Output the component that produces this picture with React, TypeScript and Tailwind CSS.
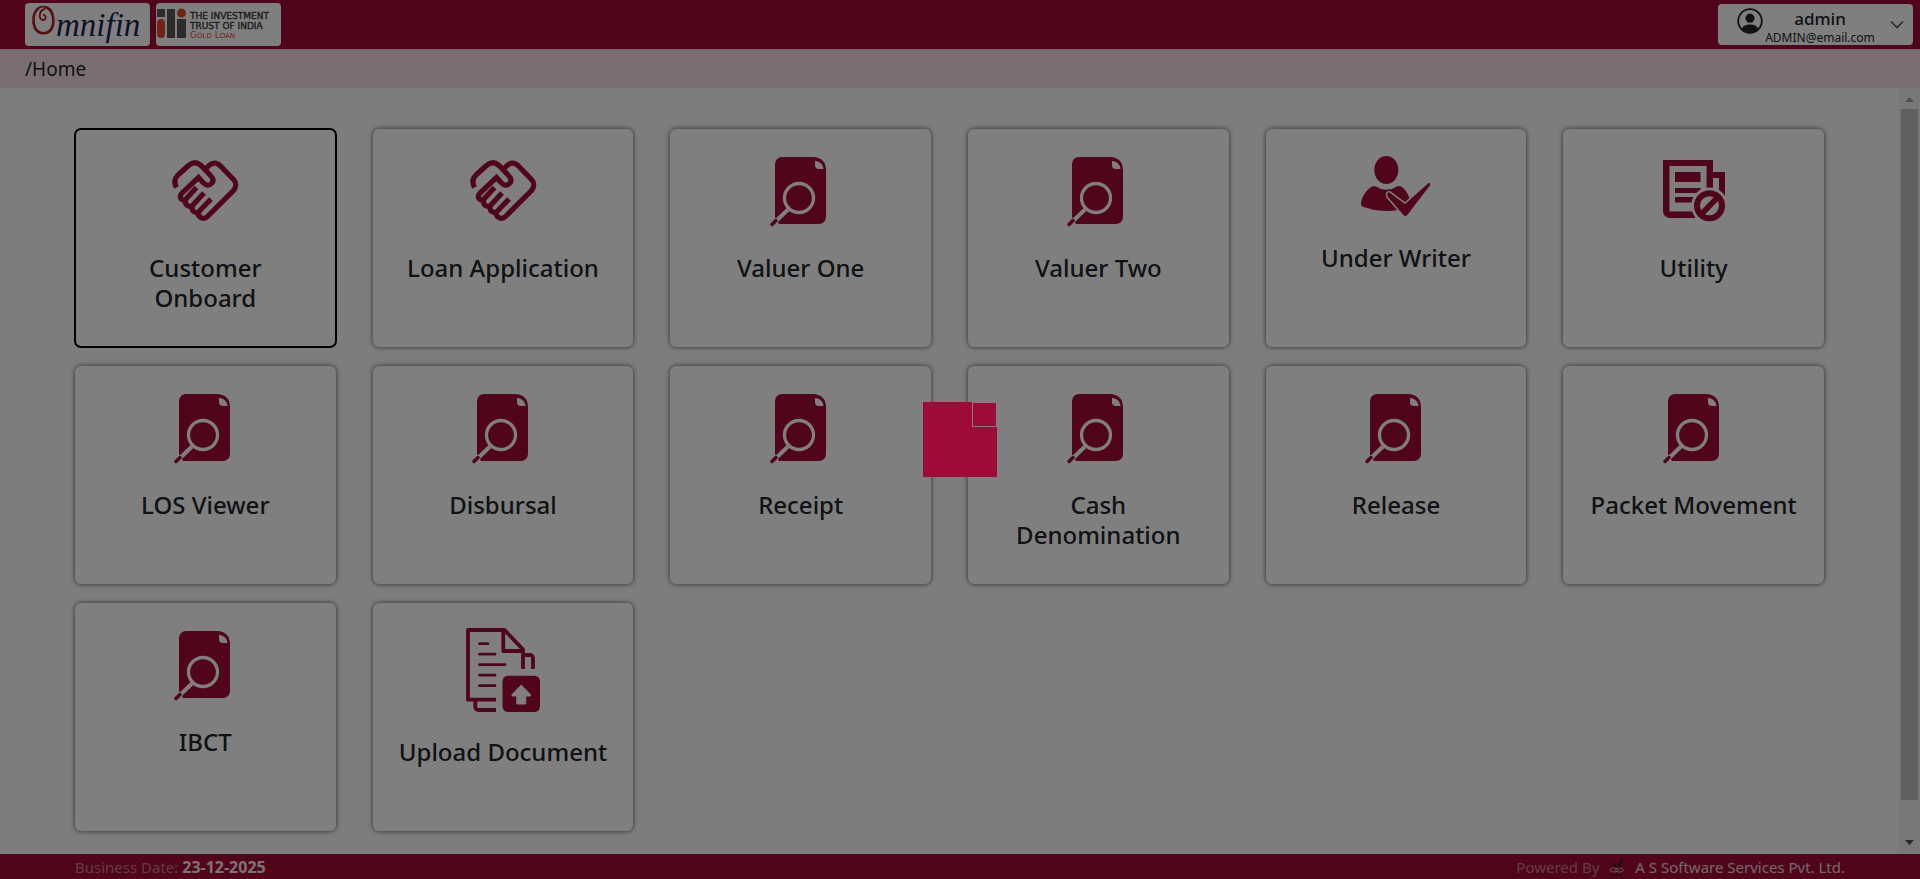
import type { ReactNode } from "react";

function HandshakeIcon() {
  return (
    <svg viewBox="0 0 80 80" className="h-20 w-20" aria-hidden="true">
      <g fill="none" stroke="currentColor" strokeWidth="5.200" strokeLinejoin="miter">
        <path d="M11.500 38.500C9 34 9.500 29.500 13 26L23.500 16.500C27.500 13 32 13 36 16.500L45.500 26.500C48.500 29.500 49 32 46.500 34.500C44 37 41 36.500 38.500 34L33.500 28.500L17.500 43.500C13.500 47.500 15.500 51.500 20.500 51.500C20 55.500 22.500 58 27 57.500C26.500 61.500 29 64 33 63.500C33 69 39 71 42.500 67.500L68.500 41.500C71.500 38 71.500 33.500 68.500 30.500L55.500 17C51.500 13 47 13.500 43.500 17L40.500 20" />
        <path d="M31.500 38.500 20.500 50.500M39 44 27 57M46 50 33.500 63" />
      </g>
    </svg>
  );
}

function SearchDocIcon() {
  return (
    <svg viewBox="0 0 80 80" className="h-20 w-20" aria-hidden="true">
      <path d="M21 8H52C60 8 65 13 65 21V68a7 7 0 0 1-7 7H18L14 68V15a7 7 0 0 1 7-7Z" fill="currentColor" />
      <path d="M54 12v4a4 4 0 0 0 4 4h4.500C62 15.500 59 12.500 54 12Z" fill="#fff" />
      <path d="M27 60.500 13 74" stroke="#fff" strokeWidth="4" />
      <circle cx="38" cy="49" r="14.500" fill="none" stroke="#fff" strokeWidth="3.300" />
      <path d="M15 71.500 11 75.500" stroke="currentColor" strokeWidth="3.500" strokeLinecap="round" />
    </svg>
  );
}

function UnderWriterIcon() {
  return (
    <svg viewBox="0 0 80 70" className="h-[70px] w-20" aria-hidden="true">
      <ellipse cx="30.300" cy="21" rx="12" ry="14" fill="currentColor" />
      <path
        d="M16 37.500C18 36.500 20 37 22 38.500C27 41.500 34 41.500 39 38.500C41 36.500 44 36.500 46 38C51 42 54 48 54.500 56C54 58 50 59.500 42 61C34 62.500 24 62 16 60.500C11 58.500 5 58.500 5 55C5.500 48 10 41 16 37.500Z"
        fill="currentColor"
      />
      <path
        d="M33.500 43.500C31 43.500 30.500 45.500 32 48L46.500 65C48.500 67.500 50.500 67.500 52 65L73.500 37C75.500 34 73 33 71 35.500L49 55Z"
        fill="currentColor"
        stroke="#fff"
        strokeWidth="3"
        strokeLinejoin="round"
        paintOrder="stroke"
      />
    </svg>
  );
}

function UtilityIcon() {
  return (
    <svg viewBox="0 0 80 80" className="h-20 w-20" aria-hidden="true">
      <path
        fill="currentColor"
        fillRule="evenodd"
        d="M9 11H59V23H71V47H65V29H59V47H52.500V17H15.500V62.500H41V69H16a7 7 0 0 1-7-7Z"
      />
      <path fill="currentColor" d="M21 23H46.500V33H21ZM21 39H46.500V44H21ZM21 48H42V53.500H21Z" />
      <circle cx="55.500" cy="56.700" r="18.300" fill="#fff" />
      <circle cx="55.500" cy="56.700" r="12.500" fill="none" stroke="currentColor" strokeWidth="6" />
      <path d="M47 65.500 64 48" stroke="currentColor" strokeWidth="5.500" />
    </svg>
  );
}

function UploadIcon() {
  return (
    <svg viewBox="0 0 80 90" className="h-[90px] w-20" aria-hidden="true">
      <g fill="none" stroke="currentColor" strokeWidth="3.800" strokeLinejoin="round">
        <path d="M33 76.700H5V7H41.500L60 26.500V46" />
        <path d="M40.300 7V28H60" />
        <path d="M60 32H67a3 3 0 0 1 3 3V46M12.300 77V84a3 3 0 0 0 3 3H33" />
      </g>
      <path
        d="M16.500 20.700H25M16.500 31.200H32M16.500 41.700H42M16.500 52.200H32M16.500 62.700H32"
        stroke="currentColor"
        strokeWidth="2.800"
        strokeLinecap="round"
      />
      <rect x="39.500" y="52.700" width="37.500" height="36.300" rx="5.500" fill="currentColor" />
      <path
        d="M58.300 62 67.500 71.500V73H62.800V81H53.800V73H49.100V71.500Z"
        fill="#fff"
        stroke="#fff"
        strokeLinejoin="round"
      />
    </svg>
  );
}

type Tile = { title: string; icon: ReactNode; active?: boolean };

const tiles: Tile[] = [
  { title: "Customer Onboard", icon: <HandshakeIcon />, active: true },
  { title: "Loan Application", icon: <HandshakeIcon /> },
  { title: "Valuer One", icon: <SearchDocIcon /> },
  { title: "Valuer Two", icon: <SearchDocIcon /> },
  { title: "Under Writer", icon: <UnderWriterIcon /> },
  { title: "Utility", icon: <UtilityIcon /> },
  { title: "LOS Viewer", icon: <SearchDocIcon /> },
  { title: "Disbursal", icon: <SearchDocIcon /> },
  { title: "Receipt", icon: <SearchDocIcon /> },
  { title: "Cash Denomination", icon: <SearchDocIcon /> },
  { title: "Release", icon: <SearchDocIcon /> },
  { title: "Packet Movement", icon: <SearchDocIcon /> },
  { title: "IBCT", icon: <SearchDocIcon /> },
  { title: "Upload Document", icon: <UploadIcon /> },
];

function TileCard({ title, icon, active }: Tile) {
  return (
    <button
      type="button"
      className={`flex flex-col items-center rounded-md bg-white px-6 pt-5 pb-[34px] text-[#a00a36] ${
        active ? "outline-2 -outline-offset-1 outline-black" : "shadow-[0_0_5px_#4b5759]"
      }`}
    >
      {icon}
      <span className="mt-6 min-h-[60px] text-2xl leading-[30px] font-medium text-[#212529]">{title}</span>
    </button>
  );
}

function OmnifinLogo() {
  return (
    <svg viewBox="0 0 125 43" className="h-[43px] w-[125px] rounded bg-white" role="img" aria-label="Omnifin">
      <g fill="none" stroke="#b01c20">
        <path d="M14 5C8 9 7 18 10 25C14 32 23 32 27 25C30 17 28 6 20 4" strokeWidth="2.600" />
        <path d="M11 8C14 2 23 2 27 9M20 6C14 7 13 16 18 17C22 17 21 11 18 12" strokeWidth="1.800" />
      </g>
      <text x="31" y="33" fill="#1c2350" fontFamily="Liberation Serif, serif" fontStyle="italic" fontSize="33">
        mnifin
      </text>
    </svg>
  );
}

function TrustLogo() {
  return (
    <svg viewBox="0 0 125 43" className="h-[43px] w-[125px] rounded bg-white" role="img" aria-label="The Investment Trust of India Gold Loan">
      <path d="M1 6H9V14H1ZM11 6H19V35H11ZM21 16H30V35H21Z" fill="#58595b" />
      <rect x="1" y="16" width="8" height="19" rx="4" fill="#e0492f" />
      <circle cx="25.500" cy="10" r="4.500" fill="#e0492f" />
      <g fontFamily="DejaVu Sans, sans-serif">
        <text x="34" y="16" fontSize="9" fill="#414042" stroke="#414042" strokeWidth="0.400">THE INVESTMENT</text>
        <text x="34" y="26" fontSize="9" fill="#414042" stroke="#414042" strokeWidth="0.400">TRUST OF INDIA</text>
        <text x="34" y="35" fontSize="9" fill="#e0492f">
          G<tspan fontSize="7">OLD</tspan> L<tspan fontSize="7">OAN</tspan>
        </text>
      </g>
    </svg>
  );
}

function Header() {
  return (
    <header className="flex h-[50px] items-start justify-between border-b border-[#e0b8c4] bg-[#a00a36] pr-[7px] pl-[25px]">
      <div className="flex gap-1.5 pt-[3px]">
        <OmnifinLogo />
        <TrustLogo />
      </div>
      <button type="button" className="mt-1 flex h-[41px] w-[195px] items-start rounded bg-white pt-1 pr-2 pl-[19px] text-[#212529]">
        <svg viewBox="0 0 26 26" className="h-[26px] w-[26px] shrink-0" aria-hidden="true">
          <circle cx="13" cy="13" r="11.800" fill="none" stroke="currentColor" strokeWidth="1.800" />
          <circle cx="13" cy="10.300" r="4.500" fill="currentColor" />
          <path d="M4.500 21C6.500 17.500 9 16.500 13 16.500S19.500 17.500 21.500 21C17 26 9 26 4.500 21Z" fill="currentColor" />
        </svg>
        <span className="flex flex-1 flex-col items-center pr-3">
          <span className="text-[17px] leading-[22px] font-medium">admin</span>
          <span className="text-xs leading-4">ADMIN@email.com</span>
        </span>
        <svg viewBox="0 0 16 16" className="mt-2 h-4 w-4 shrink-0" aria-hidden="true">
          <path d="m2 5.500 6 6 6-6" fill="none" stroke="#555" strokeWidth="1.600" />
        </svg>
      </button>
    </header>
  );
}

function ScrollRail() {
  return (
    <div className="flex w-[21px] shrink-0 flex-col items-center bg-[#f1f1f1] pr-px" aria-hidden="true">
      <svg viewBox="0 0 17 21" className="h-[21px] w-[17px]">
        <path d="M4 14 8.500 9 13 14Z" fill="#a3a3a3" />
      </svg>
      <div className="w-[17px] grow-[691] bg-[#c1c1c1]" />
      <div className="grow-[33]" />
      <svg viewBox="0 0 17 21" className="h-[21px] w-[17px]">
        <path d="M4 7 8.500 12 13 7Z" fill="#505050" />
      </svg>
    </div>
  );
}

function Footer() {
  return (
    <footer className="flex h-[25px] items-center justify-between bg-[#a00a36] px-[75px] text-[15px] leading-6">
      <p className="text-white/45">
        Business Date: <strong className="text-base text-white/90">23-12-2025</strong>
      </p>
      <p className="flex items-center text-white/45">
        Powered By
        <svg viewBox="0 0 16 20" className="mx-2.5 h-5 w-4" aria-hidden="true">
          <path d="M4 5 8 11 14 1 8.500 15Z" fill="#222" stroke="#222" />
          <ellipse cx="5" cy="13" rx="4" ry="2" fill="none" stroke="#e3a0a8" />
          <ellipse cx="10.500" cy="13" rx="4" ry="2" fill="none" stroke="#e3a0a8" />
          <path d="M2 18H14" stroke="#222" strokeWidth="2" strokeDasharray="3 1" />
        </svg>
        <a href="#company" className="text-white/80">A S Software Services Pvt. Ltd.</a>
      </p>
    </footer>
  );
}

function LoadingOverlay() {
  return (
    <div className="fixed inset-0 flex items-center justify-center bg-black/50" role="status" aria-label="Loading">
      <svg viewBox="0 0 74 75" className="h-[75px] w-[74px]" aria-hidden="true">
        <path d="M0 0H49V25H74V75H0Z" fill="#a00a36" />
        <path d="M49 0H74V25H49Z" fill="#808080" />
        <path d="M50 1H73V24H50Z" fill="#a00a36" />
      </svg>
    </div>
  );
}

export default function App() {
  return (
    <div className="flex h-screen flex-col bg-[#fafafa] font-['Noto_Sans','Open_Sans',sans-serif] text-[#212529]">
      <Header />
      <nav className="flex h-[38px] shrink-0 items-center bg-[#f6dde4] px-[25px]">
        <a href="#home" className="text-[19px] leading-6">/Home</a>
      </nav>
      <div className="flex min-h-0 flex-1">
        <main className="min-w-0 flex-1 overflow-hidden px-[75px] pt-[41px]">
          <div className="grid grid-cols-6 gap-x-[37px] gap-y-[19px]">
            {tiles.map((tile) => (
              <TileCard key={tile.title} {...tile} />
            ))}
          </div>
        </main>
        <ScrollRail />
      </div>
      <Footer />
      <LoadingOverlay />
    </div>
  );
}
